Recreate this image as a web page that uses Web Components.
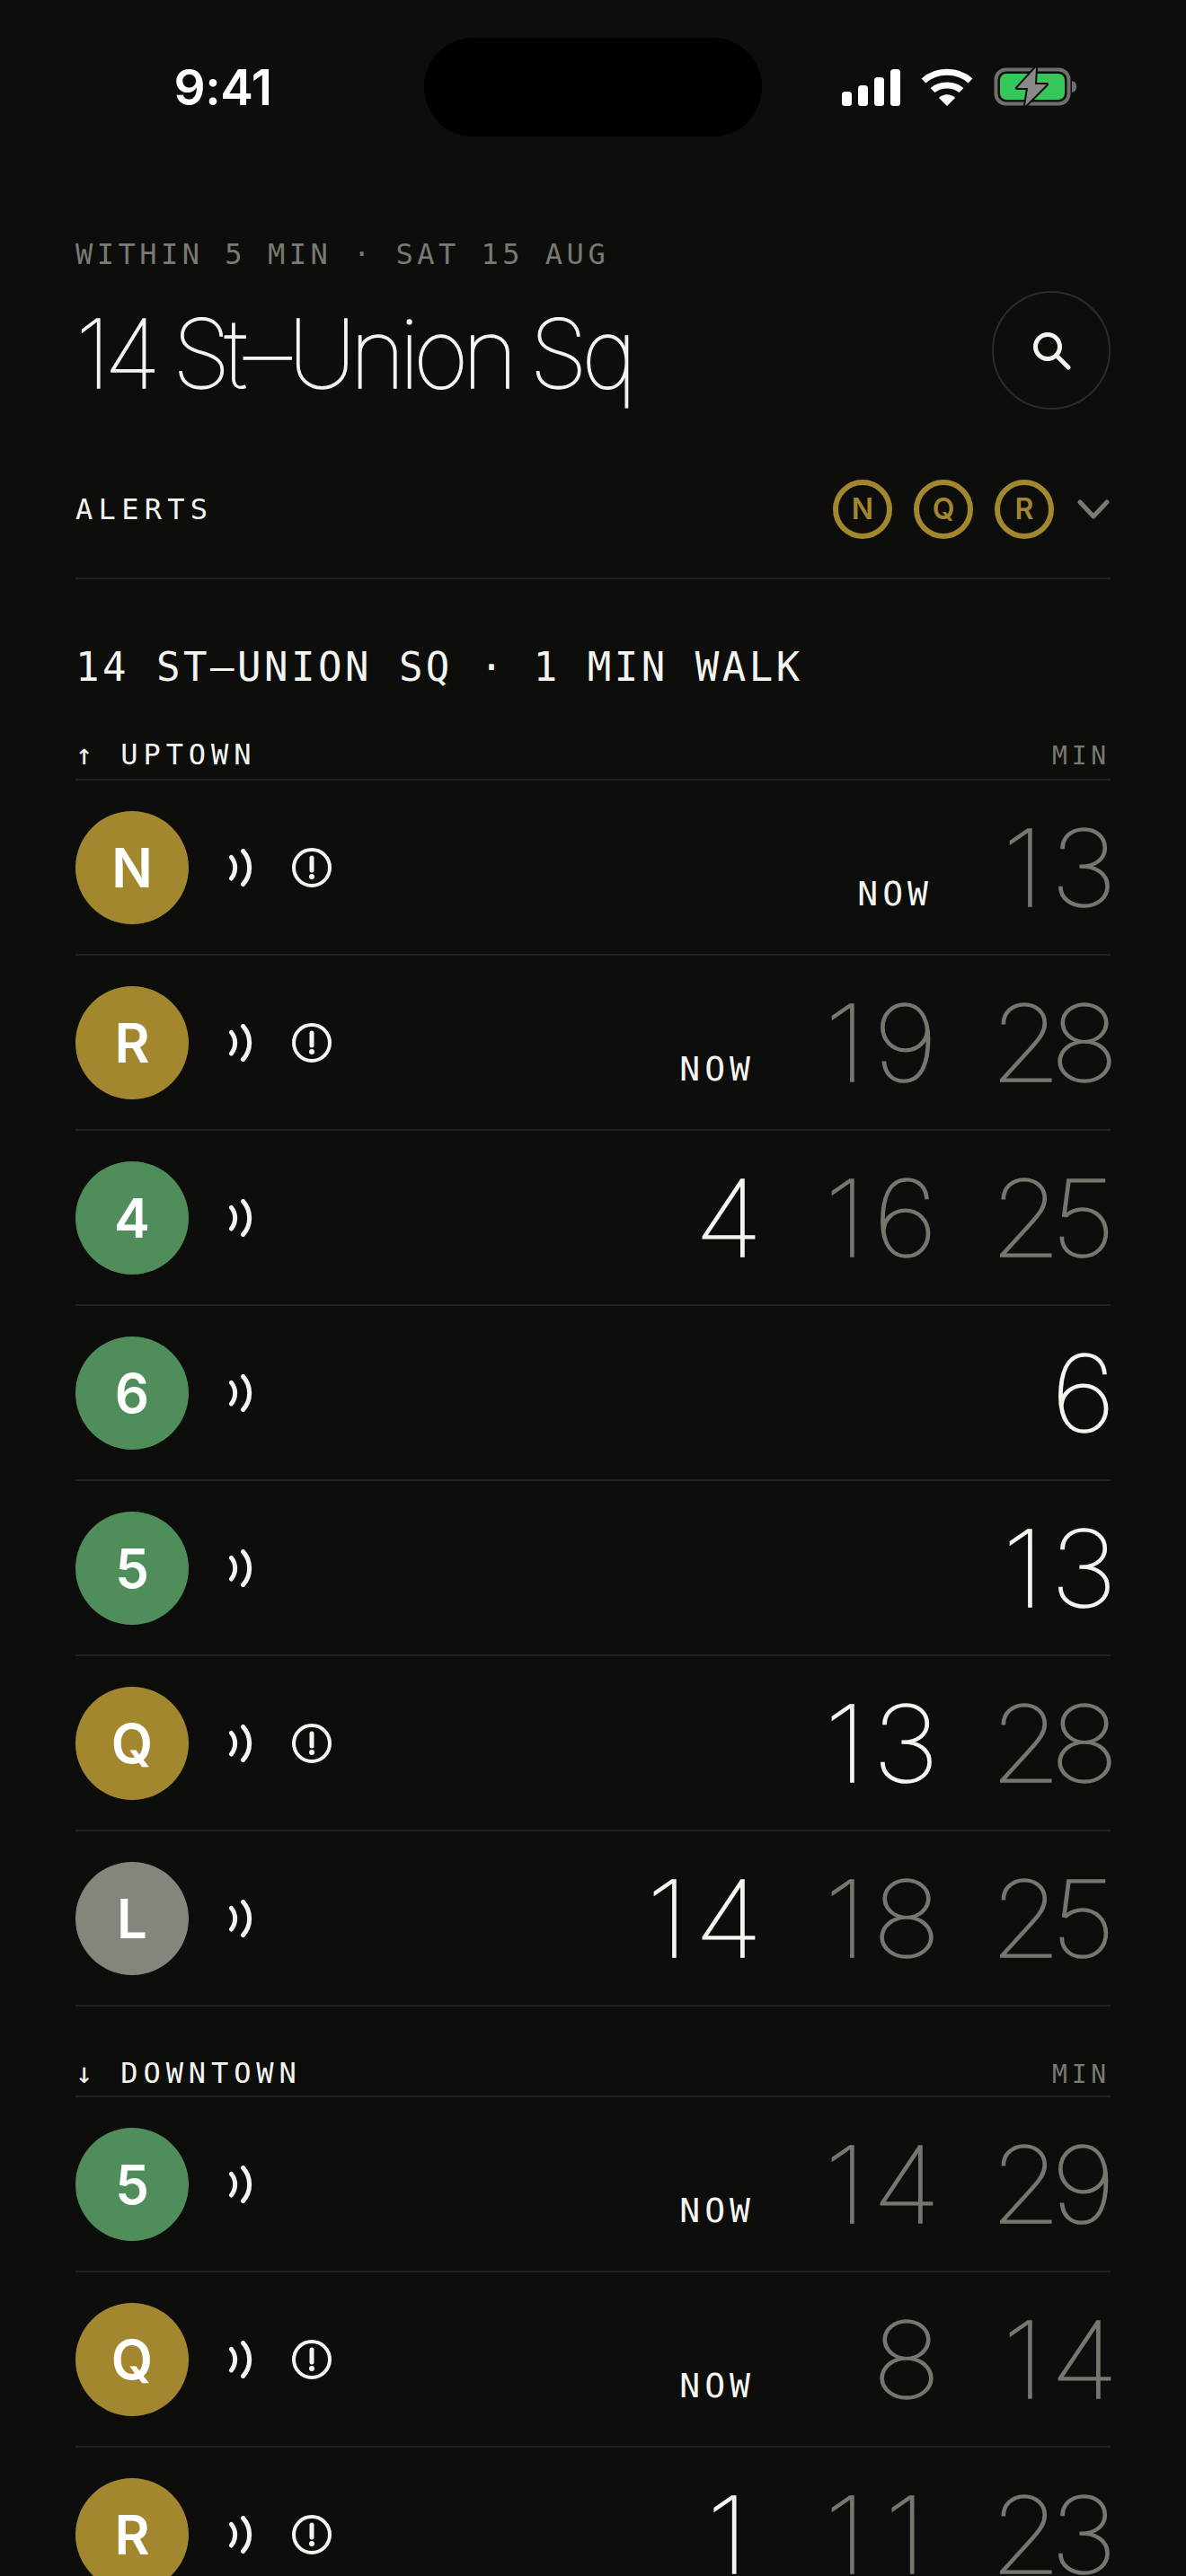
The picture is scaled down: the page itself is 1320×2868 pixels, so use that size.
<!DOCTYPE html>
<html lang="en">
<head>
<meta charset="utf-8">
<title>14 St-Union Sq</title>
<style>
  html, body { margin: 0; background: #0d0d0c; }
  body { height: 2868px; overflow: hidden; }
</style>
</head>
<body>
<transit-app>
  <status-bar></status-bar>
  <station-header eyebrow="WITHIN 5 MIN · SAT 15 AUG"></station-header>
  <alerts-bar lines="N,Q,R"></alerts-bar>
  <section-title>14 ST—UNION SQ · 1 MIN WALK</section-title>

  <direction-head arrow="↑" style="--top: 47px; --h: 49px">UPTOWN</direction-head>
  <train-row line="N" alert times="-,now,13:d"></train-row>
  <train-row line="R" alert times="now,19:d,28:d"></train-row>
  <train-row line="4" times="4,16:d,25:d"></train-row>
  <train-row line="6" times="-,-,6"></train-row>
  <train-row line="5" times="-,-,13"></train-row>
  <train-row line="Q" alert times="-,13,28:d"></train-row>
  <train-row line="L" times="14,18:d,25:d"></train-row>

  <direction-head arrow="↓" style="--top: 52px; --h: 47px">DOWNTOWN</direction-head>
  <train-row line="5" times="now,14:d,29:d"></train-row>
  <train-row line="Q" alert times="now,8:d,14:d"></train-row>
  <train-row line="R" alert times="1,11:d,23:d"></train-row>
</transit-app>

<script>
const SANS = `Inter, "Liberation Sans", sans-serif`;
const MONO = `"DejaVu Sans Mono", "Liberation Mono", monospace`;

const LINE_COLORS = {
  N: "#a3872f", Q: "#a3872f", R: "#a3872f",
  4: "#4f8e5a", 5: "#4f8e5a", 6: "#4f8e5a",
  L: "#85857c",
};

class TransitApp extends HTMLElement {
  constructor() {
    super();
    this.attachShadow({ mode: "open" }).innerHTML = `
      <style>
        :host { display: block; height: 2868px; overflow: hidden; background: #0d0d0c; color: #f5f5f0; }
        .page { padding: 0 84px; }
      </style>
      <div class="page"><slot></slot></div>`;
  }
}

class StatusBar extends HTMLElement {
  constructor() {
    super();
    this.attachShadow({ mode: "open" }).innerHTML = `
      <style>
        :host { display: grid; grid-template-columns: 388px 376px 1fr; height: 194px; margin: 0 -84px; padding: 42px 0 0 84px; box-sizing: border-box; }
        .time { font: 600 55px/110px ${SANS}; letter-spacing: -0.5px; color: #fff; text-align: center; padding-right: 60px; }
        .island { width: 376px; height: 110px; border-radius: 55px; background: #000; }
        .icons { display: flex; align-items: center; height: 110px; padding-left: 89px; }
        svg { display: block; flex: none; }
      </style>
      <div class="time">9:41</div>
      <div class="island"></div>
      <div class="icons">
        <svg width="65" height="41" viewBox="0 0 65 41" fill="#fff">
          <rect x="0" y="25" width="11" height="16" rx="3.5"/>
          <rect x="18" y="18" width="11" height="23" rx="3.5"/>
          <rect x="36" y="9" width="11" height="32" rx="3.5"/>
          <rect x="54" y="0" width="11" height="41" rx="3.5"/>
        </svg>
        <svg style="margin-left:23px" width="58" height="42" viewBox="0 0 58 42" fill="none" stroke="#fff" stroke-width="7">
          <path d="M3 14 C17 1 41 1 55 14"/>
          <path d="M13 24.500 C21 17 37 17 45 24.500"/>
          <path d="M20 33 C25 28 33 28 38 33 L29 42 Z" fill="#fff" stroke="none"/>
        </svg>
        <svg style="margin-left:23px" width="94" height="46" viewBox="0 0 94 46">
          <rect x="2.500" y="3.500" width="81" height="38" rx="11" fill="none" stroke="#6f6f6f" stroke-width="4"/>
          <rect x="7" y="8" width="72" height="29" rx="7" fill="#34c759"/>
          <path d="M87 16 C91 17 92 19 92 22.500 C92 26 91 28 87 29 Z" fill="#6f6f6f"/>
          <path d="M47 1 L26 24 L38 24 L35 44 L59 20 L46 20 Z" fill="#8a8a8a" stroke="#0d0d0c" stroke-width="4" stroke-linejoin="round" paint-order="stroke"/>
        </svg>
      </div>`;
  }
}

class StationHeader extends HTMLElement {
  constructor() {
    super();
    this.attachShadow({ mode: "open" }).innerHTML = `
      <style>
        :host { display: block; }
        .eyebrow { font: 400 32px/40px ${MONO}; letter-spacing: 4.500px; color: #7a7a72; padding-top: 69px; }
        .row { display: flex; justify-content: space-between; align-items: center; margin-top: 21px; }
        h1 { margin: 0; font: 100 106px/131px ${SANS}; -webkit-text-stroke: 1.300px #f5f5f0; letter-spacing: -7px; word-spacing: -3px; color: #f5f5f0; position: relative; top: 3px; }
        .dash { margin: 0 3px; }
        .search { width: 132px; height: 132px; box-sizing: border-box; border: 2px solid #2c2c27; border-radius: 50%; display: flex; align-items: center; justify-content: center; }
      </style>
      <div class="eyebrow"></div>
      <div class="row">
        <h1>14 St<span class="dash">–</span>Union Sq</h1>
        <div class="search">
          <svg width="44" height="44" viewBox="0 0 44 44" fill="none" stroke="#f5f5f0" stroke-width="5" stroke-linecap="round">
            <circle cx="18" cy="18" r="13.500"/>
            <path d="M28 28 L41 41"/>
          </svg>
        </div>
      </div>`;
    this.shadowRoot.querySelector(".eyebrow").textContent = this.getAttribute("eyebrow");
  }
}

class AlertsBar extends HTMLElement {
  constructor() {
    super();
    const badges = this.getAttribute("lines").split(",")
      .map((l) => `<span class="badge">${l}</span>`).join("");
    this.attachShadow({ mode: "open" }).innerHTML = `
      <style>
        :host { display: flex; align-items: center; justify-content: space-between; height: 153px; padding-top: 5px; margin-top: 29px; border-bottom: 2px solid #222220; }
        .label { font: 400 32px/40px ${MONO}; letter-spacing: 6.300px; color: #f5f5f0; }
        .right { display: flex; align-items: center; gap: 24px; }
        .badge { width: 66px; height: 66px; box-sizing: border-box; border: 6px solid #a3872f; border-radius: 50%; color: #a3872f; font: 600 32px/54px ${SANS}; text-align: center; }
        svg { display: block; margin: 0 1px 0 2px; }
      </style>
      <span class="label">ALERTS</span>
      <div class="right">${badges}
        <svg width="36" height="22" viewBox="0 0 36 22" fill="none" stroke="#7a7a72" stroke-width="5" stroke-linecap="round" stroke-linejoin="round"><path d="M3 3 L18 19 L33 3"/></svg>
      </div>`;
  }
}

class SectionTitle extends HTMLElement {
  constructor() {
    super();
    this.attachShadow({ mode: "open" }).innerHTML = `
      <style>
        :host { display: block; font: 400 44px/56px ${MONO}; letter-spacing: 3.500px; color: #f5f5f0; padding-top: 70px; white-space: nowrap; }
      </style>
      <slot></slot>`;
  }
}

class DirectionHead extends HTMLElement {
  constructor() {
    super();
    this.attachShadow({ mode: "open" }).innerHTML = `
      <style>
        :host { display: flex; justify-content: space-between; align-items: flex-start; padding-top: var(--top); height: var(--h); border-bottom: 2px solid #222220; }
        .dir { font: 400 32px/44px ${MONO}; letter-spacing: 5.900px; color: #f5f5f0; white-space: pre; }
        .min { font: 400 28px/40px ${MONO}; letter-spacing: 4.800px; color: #7a7a72; margin-top: 4px; }
      </style>
      <span class="dir"><span class="arrow"></span> <slot></slot></span>
      <span class="min">MIN</span>`;
    this.shadowRoot.querySelector(".arrow").textContent = this.getAttribute("arrow");
  }
}

class TrainRow extends HTMLElement {
  constructor() {
    super();
    const line = this.getAttribute("line");
    const alert = this.hasAttribute("alert") ? `
      <svg class="warn" width="44" height="44" viewBox="0 0 44 44" fill="none" stroke="#f5f5f0">
        <circle cx="22" cy="22" r="20" stroke-width="4"/>
        <path d="M22 11 L22 25" stroke-width="5" stroke-linecap="round"/>
        <circle cx="22" cy="32" r="3" fill="#f5f5f0" stroke="none"/>
      </svg>` : "";
    const cells = this.getAttribute("times").split(",").map((t) => {
      if (t === "-") return `<span></span>`;
      if (t === "now") return `<span class="now">NOW</span>`;
      const [value, dim] = t.split(":");
      // the font's tabular 1 grows a foot, so keep even digit cells by hand
      const digits = [...value].map((d) => `<span class="d">${d}</span>`).join("");
      return `<span class="num${dim ? " dim" : ""}">${digits}</span>`;
    }).join("");
    this.attachShadow({ mode: "open" }).innerHTML = `
      <style>
        :host { display: flex; align-items: center; height: 193px; border-bottom: 2px solid #222220; }
        .bullet { flex: none; width: 126px; height: 126px; border-radius: 50%; background: ${LINE_COLORS[line]}; color: #fff; font: 600 60px/126px ${SANS}; text-align: center; }
        .live { flex: none; display: block; margin-left: 45px; }
        .warn { flex: none; display: block; margin-left: 44px; }
        .times { margin-left: auto; display: grid; grid-template-columns: repeat(3, 138px); column-gap: 60px; justify-items: end; align-items: center; }
        .num { display: flex; font: 100 118px/130px ${SANS}; -webkit-text-stroke: 1.600px currentColor; letter-spacing: -6px; color: #f5f5f0; transform: scaleX(1.08); transform-origin: right center; }
        .d { display: block; width: 62px; text-align: center; }
        .num.dim { color: #77776f; }
        .now { font: 400 38px/48px ${MONO}; letter-spacing: 5px; color: #f5f5f0; align-self: end; margin-bottom: 12px; white-space: nowrap; }
      </style>
      <span class="bullet">${line}</span>
      <svg class="live" width="26" height="42" viewBox="0 0 26 42" fill="none" stroke="#f5f5f0" stroke-width="5" stroke-linecap="round">
        <path d="M2.500 9.500 C8 16 8 26 2.500 33"/>
        <path d="M15.500 2.500 C25 13 25 29 15.500 39.500"/>
      </svg>
      ${alert}
      <div class="times">${cells}</div>`;
  }
}

customElements.define("transit-app", TransitApp);
customElements.define("status-bar", StatusBar);
customElements.define("station-header", StationHeader);
customElements.define("alerts-bar", AlertsBar);
customElements.define("section-title", SectionTitle);
customElements.define("direction-head", DirectionHead);
customElements.define("train-row", TrainRow);
</script>
</body>
</html>
